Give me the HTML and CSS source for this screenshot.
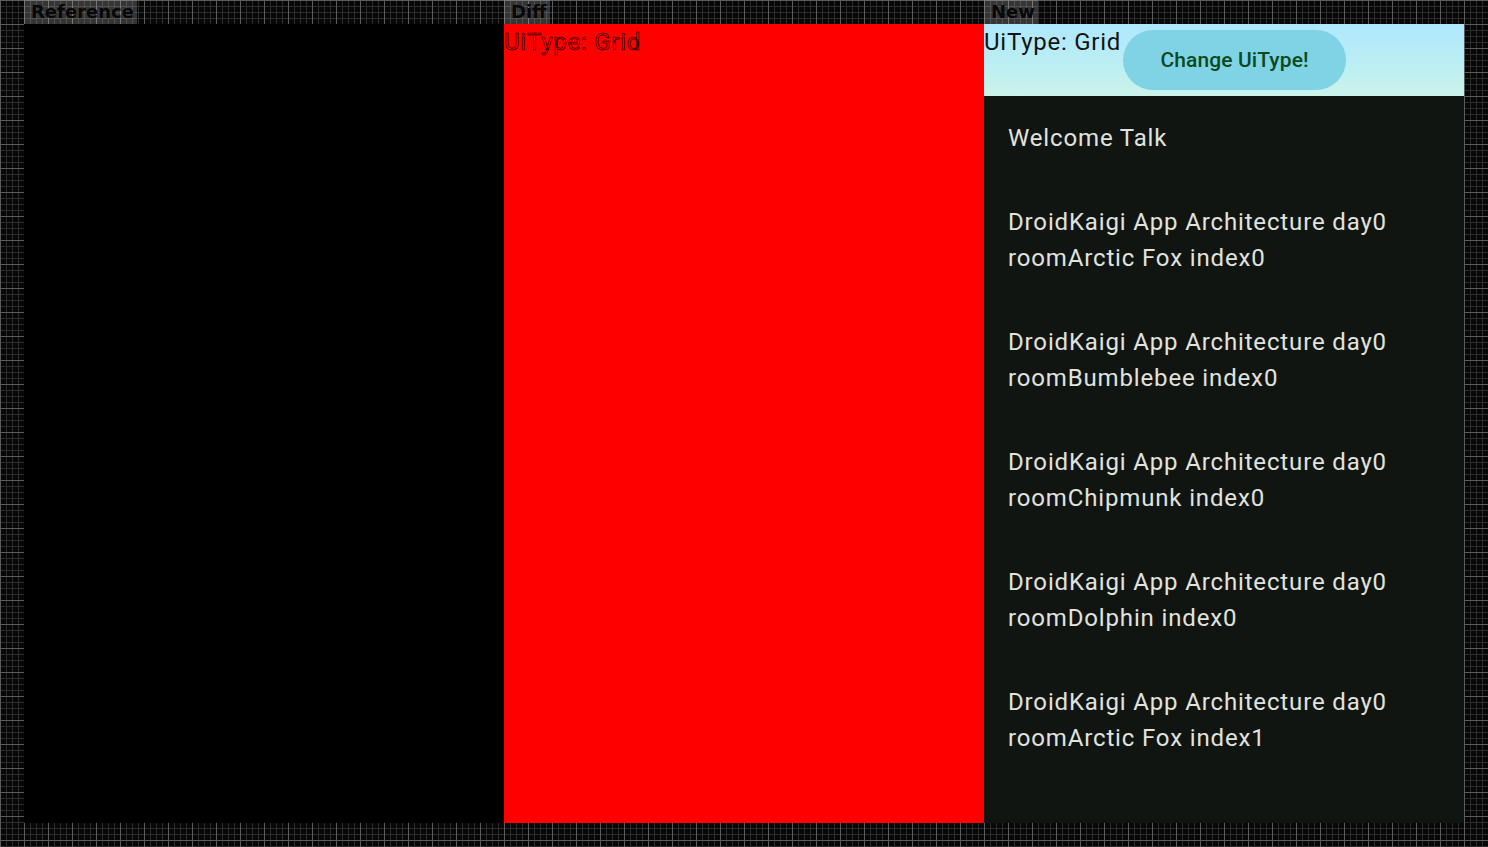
FILE: index.html
```html
<!DOCTYPE html>
<html>
<head>
<meta charset="utf-8">
<link rel="stylesheet" href="styles.css">
</head>
<body>
<div class="board">
  <div class="col">
    <div class="label-row"><span class="label">Reference</span></div>
    <div class="panel panel-ref"></div>
  </div>
  <div class="col">
    <div class="label-row"><span class="label">Diff</span></div>
    <div class="panel panel-diff">
      <div class="diff-text">UiType: Grid</div>
    </div>
  </div>
  <div class="col">
    <div class="label-row"><span class="label">New</span></div>
    <div class="panel panel-new">
      <div class="app-header">
        <div class="uitype">UiType: Grid</div>
        <button class="change-btn">Change UiType!</button>
      </div>
      <ul class="sessions">
        <li>Welcome Talk</li>
        <li>DroidKaigi App Architecture day0<br>roomArctic Fox index0</li>
        <li>DroidKaigi App Architecture day0<br>roomBumblebee index0</li>
        <li>DroidKaigi App Architecture day0<br>roomChipmunk index0</li>
        <li>DroidKaigi App Architecture day0<br>roomDolphin index0</li>
        <li>DroidKaigi App Architecture day0<br>roomArctic Fox index1</li>
      </ul>
    </div>
  </div>
</div>
</body>
</html>
```

FILE: styles.css
```css
html, body {
  margin: 0;
  padding: 0;
}
body {
  width: 1488px;
  height: 847px;
  overflow: hidden;
  background-color: #070707;
  background-image:
    linear-gradient(to right, #5c5c5c 1px, transparent 1px),
    linear-gradient(to bottom, #5c5c5c 1px, transparent 1px),
    linear-gradient(to right, #2c2c2c 1px, transparent 1px),
    linear-gradient(to bottom, #2c2c2c 1px, transparent 1px);
  background-size: 24px 24px, 24px 24px, 6px 6px, 6px 6px;
  font-family: "DejaVu Sans", sans-serif;
}
.board {
  display: flex;
  padding-left: 24px;
}
.col {
  width: 480px;
  display: flex;
  flex-direction: column;
}
.label-row {
  height: 24px;
  display: flex;
}
.label {
  background: rgba(200, 200, 200, 0.24);
  color: #080808;
  font-weight: bold;
  font-size: 18px;
  line-height: 24px;
  padding: 0 3px 0 7px;
}
.panel {
  height: 799px;
  overflow: hidden;
}
.panel-ref {
  background: #000;
}
.panel-diff {
  background: #ff0000;
}
.diff-text {
  font-family: Roboto, sans-serif;
  font-size: 24px;
  line-height: 36px;
  letter-spacing: 0.75px;
  color: transparent;
  -webkit-text-stroke: 0.6px #000;
}
.panel-new {
  background: #111512;
}
.app-header {
  height: 72px;
  background: linear-gradient(to bottom, #aee8fe 0%, #bdeff2 60%, #cbf3e9 100%);
  display: flex;
  align-items: flex-start;
}
.uitype {
  font-family: Roboto, sans-serif;
  font-size: 24px;
  line-height: 36px;
  letter-spacing: 0.75px;
  color: #141414;
}
.change-btn {
  margin: 6px 0 0 2px;
  width: 223px;
  height: 60px;
  border: none;
  border-radius: 30px;
  background: #80d3e5;
  color: #0b4a1d;
  font-family: Roboto, sans-serif;
  font-weight: 500;
  font-size: 21px;
  letter-spacing: 0.1px;
  padding: 0;
}
.sessions {
  list-style: none;
  margin: 0;
  padding: 0;
}
.sessions li {
  padding: 24px;
  font-family: Roboto, sans-serif;
  font-size: 24px;
  line-height: 36px;
  letter-spacing: 0.85px;
  color: #e0e3de;
}
```
